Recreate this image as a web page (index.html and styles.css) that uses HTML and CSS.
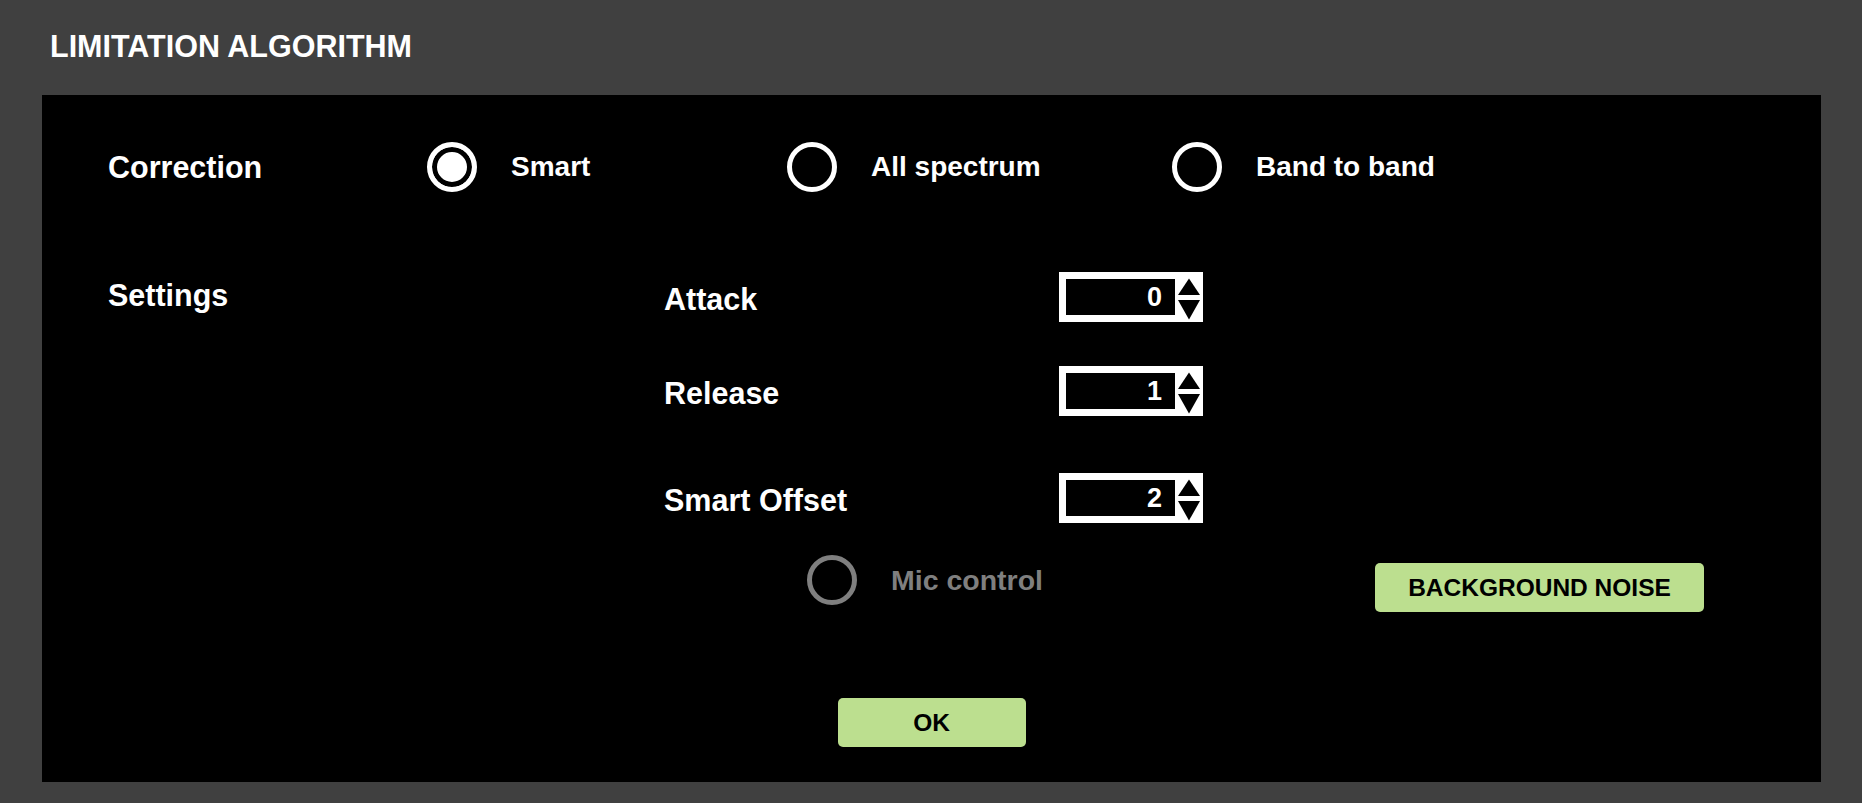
FILE: index.html
```html
<!DOCTYPE html>
<html lang="en">
<head>
  <meta charset="utf-8">
  <title>Limitation Algorithm</title>
  <meta name="viewport" content="width=device-width, initial-scale=1.0">
  <link rel="stylesheet" href="styles.css">
</head>
<body>
  <div class="window">
    <h1 class="title">LIMITATION ALGORITHM</h1>

    <div class="panel">
      <div class="correction">
        <span class="label">Correction</span>
        <label class="option"><span class="radio checked"></span>Smart</label>
        <label class="option"><span class="radio"></span>All spectrum</label>
        <label class="option"><span class="radio"></span>Band to band</label>
      </div>

      <div class="settings">
        <span class="label settings-label">Settings</span>
        <div class="params">
          <div class="param">
            <span class="label">Attack</span>
            <div class="spin">
              <span class="value">0</span>
              <svg class="arrows" viewBox="0 0 28 50"><polygon points="14,6.5 25,23 3,23"/><polygon points="3,28 25,28 14,47.5"/></svg>
            </div>
          </div>
          <div class="param release">
            <span class="label">Release</span>
            <div class="spin">
              <span class="value">1</span>
              <svg class="arrows" viewBox="0 0 28 50"><polygon points="14,6.5 25,23 3,23"/><polygon points="3,28 25,28 14,47.5"/></svg>
            </div>
          </div>
          <div class="param offset">
            <span class="label">Smart Offset</span>
            <div class="spin">
              <span class="value">2</span>
              <svg class="arrows" viewBox="0 0 28 50"><polygon points="14,6.5 25,23 3,23"/><polygon points="3,28 25,28 14,47.5"/></svg>
            </div>
          </div>
        </div>
      </div>

      <div class="mic-row">
        <label class="option disabled"><span class="radio"></span>Mic control</label>
        <button class="btn btn-noise">BACKGROUND NOISE</button>
      </div>

      <div class="actions">
        <button class="btn btn-ok">OK</button>
      </div>
    </div>
  </div>
</body>
</html>
```

FILE: styles.css
```css
body {
  margin: 0;
  background: #404040;
  font-family: "Liberation Sans", Arial, sans-serif;
  font-weight: bold;
  color: #fff;
}

.window {
  padding: 0 41px 21px 42px;
}

.title {
  box-sizing: border-box;
  height: 95px;
  margin: 0;
  padding: 31px 0 0 8px;
  font-size: 30.5px;
  line-height: 30px;
}

.panel {
  box-sizing: border-box;
  height: 687px;
  background: #000;
  padding: 47px 66px 0 66px;
}

.label {
  font-size: 30.5px;
}

/* correction radios */
.correction {
  display: grid;
  grid-template-columns: 319px 360px 385px auto;
  align-items: center;
  height: 50px;
}

.option {
  display: flex;
  align-items: center;
  gap: 34px;
  font-size: 28px;
}

.radio {
  box-sizing: border-box;
  width: 50px;
  height: 50px;
  border: 5px solid #fff;
  border-radius: 50%;
  flex: none;
}

.radio.checked {
  background: #fff;
  box-shadow: inset 0 0 0 5px #000;
}

.option.disabled {
  color: #7f7f7f;
}

.option.disabled .radio {
  border-color: #7f7f7f;
}

/* settings */
.settings {
  display: flex;
  margin-top: 80px;
}

.settings-label {
  width: 556px;
  line-height: 50px;
  margin-top: -2px;
}

.params {
  display: flex;
  flex-direction: column;
}

.param {
  display: grid;
  grid-template-columns: 395px 144px;
  align-items: center;
  height: 50px;
}

.param .label {
  padding-top: 4px;
}

.param.release {
  margin-top: 44px;
}

.param.offset {
  margin-top: 57px;
}

.spin {
  box-sizing: border-box;
  display: flex;
  width: 144px;
  height: 50px;
  padding: 7px 0 7px 7px;
  background: #fff;
}

.spin .value {
  width: 109px;
  background: #000;
  text-align: right;
  padding-right: 13px;
  box-sizing: border-box;
  font-size: 27px;
  line-height: 36px;
}

.spin .arrows {
  width: 28px;
  height: 50px;
  margin: -7px 0;
  fill: #000;
}

/* mic + noise */
.mic-row {
  display: grid;
  grid-template-columns: 568px auto;
  align-items: start;
  margin-top: 32px;
  padding-left: 699px;
}

.mic-row .option {
  font-size: 28.5px;
}

.btn {
  border: none;
  border-radius: 5px;
  background: #bcdf8f;
  color: #000;
  font-family: "Liberation Sans", Arial, sans-serif;
  font-weight: bold;
  padding: 0;
}

.btn-noise {
  width: 329px;
  height: 49px;
  margin-top: 8px;
  font-size: 24.5px;
}

.actions {
  display: flex;
  justify-content: center;
  margin-top: 86px;
}

.btn-ok {
  width: 188px;
  height: 49px;
  font-size: 24.5px;
}
```
